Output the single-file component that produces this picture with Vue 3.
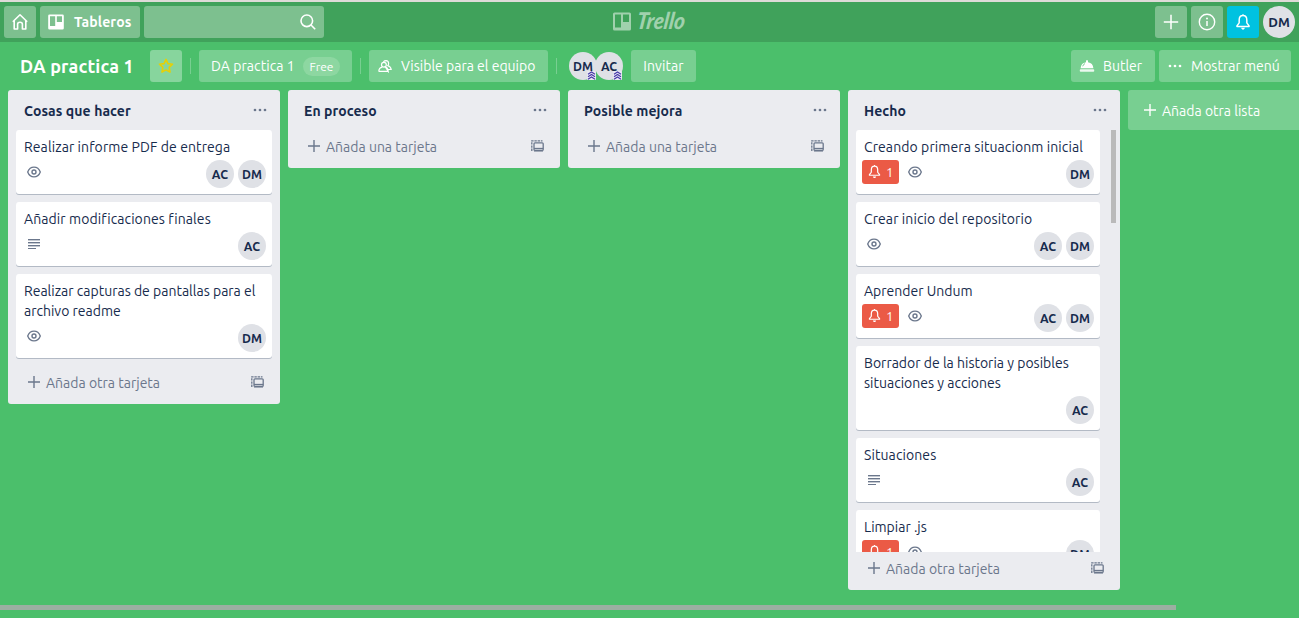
<script setup>
const lists = [
  {
    title: 'Cosas que hacer', add: 'Añada otra tarjeta',
    cards: [
      { lines: ['Realizar informe PDF de entrega'], eye: true, who: ['AC', 'DM'] },
      { lines: ['Añadir modificaciones finales'], desc: true, who: ['AC'] },
      { lines: ['Realizar capturas de pantallas para el', 'archivo readme'], eye: true, who: ['DM'], snug: true },
    ],
  },
  { title: 'En proceso', add: 'Añada una tarjeta', cards: [] },
  { title: 'Posible mejora', add: 'Añada una tarjeta', cards: [] },
  {
    title: 'Hecho', add: 'Añada otra tarjeta', scroll: true,
    cards: [
      { lines: ['Creando primera situacionm inicial'], alert: 1, eye: true, who: ['DM'] },
      { lines: ['Crear inicio del repositorio'], eye: true, who: ['AC', 'DM'] },
      { lines: ['Aprender Undum'], alert: 1, eye: true, who: ['AC', 'DM'], snug: true },
      { lines: ['Borrador de la historia y posibles', 'situaciones y acciones'], who: ['AC'], snug: true },
      { lines: ['Situaciones'], desc: true, who: ['AC'] },
      { lines: ['Limpiar .js'], alert: 1, eye: true, who: ['DM'], snug: true },
    ],
  },
]
const boardMembers = ['DM', 'AC']
</script>

<template>
  <div class="app">
    <svg class="defs" width="0" height="0">
      <symbol id="bell" viewBox="0 0 16 16">
        <path d="M8 1V2.4M8 2.2C5.7 2.2 4.6 4 4.6 6.2V8.8L2.6 11.4V12H13.4V11.4L11.4 8.8V6.2C11.4 4 10.3 2.2 8 2.2Z" fill="none" stroke="currentColor" stroke-width="1.3" stroke-linejoin="round" />
        <path d="M6.3 13.2H9.7C9.4 14.3 8.8 14.8 8 14.8S6.6 14.3 6.3 13.2Z" fill="currentColor" />
      </symbol>
      <symbol id="dots" viewBox="0 0 14 4">
        <circle cx="2" cy="2" r="1.35" fill="currentColor" /><circle cx="7" cy="2" r="1.35" fill="currentColor" /><circle cx="12" cy="2" r="1.35" fill="currentColor" />
      </symbol>
      <symbol id="plus" viewBox="0 0 12 12">
        <path d="M6 0V12M0 6H12" fill="none" stroke="currentColor" stroke-width="1.4" />
      </symbol>
      <symbol id="board" viewBox="0 0 16 16">
        <path fill-rule="evenodd" fill="currentColor" d="M1.5 0.5H14.5Q15.8 .5 15.8 1.8V14.2Q15.8 15.5 14.5 15.5H1.5Q.2 15.5 .2 14.2V1.8Q.2 .5 1.5 .5ZM2 2.2V12H7.2V2.2ZM8.8 2.2V8H14V2.2Z" />
      </symbol>
    </svg>

    <header class="top">
      <div class="side">
        <div class="hbtn square">
          <svg width="18" height="18" viewBox="0 0 18 18" fill="none" stroke="#fff" stroke-width="1.6" stroke-linejoin="round"><path d="M1.8 8.8L9 1.8L16.2 8.8M3.2 7.6V16H6.6V11.3Q6.6 9.3 9 9.3T11.4 11.3V16H14.8V7.6" /></svg>
        </div>
        <div class="hbtn boards"><svg width="16" height="16"><use href="#board" /></svg><span>Tableros</span></div>
        <div class="hbtn search">
          <svg width="16" height="16" viewBox="0 0 16 16" fill="none" stroke="#fff" stroke-width="1.6"><circle cx="6.8" cy="6.8" r="5.8" /><path d="M11 11L15.2 15.2" /></svg>
        </div>
      </div>
      <div class="logo">
        <svg width="80" height="30" viewBox="0 0 80 30">
          <path fill-rule="evenodd" fill="currentColor" d="M2.5 5.5H17.5Q19 5.5 19 7V22Q19 23.5 17.5 23.5H2.5Q1 23.5 1 22V7Q1 5.5 2.5 5.5ZM3 7.5V20.5H9V7.5ZM11 7.5V15H17V7.5Z" />
          <text x="21" y="0" transform="translate(3 22) skewX(-8)" textLength="48" lengthAdjust="spacingAndGlyphs" fill="currentColor" class="wordmark">Trello</text>
        </svg>
      </div>
      <div class="side">
        <div class="hbtn square"><svg width="16" height="16" viewBox="0 0 16 16"><path d="M8 .8V15.2M.8 8H15.2" stroke="#fff" stroke-width="1.5" /></svg></div>
        <div class="hbtn square">
          <svg width="18" height="18" viewBox="0 0 18 18"><circle cx="9" cy="9" r="7.7" fill="none" stroke="#fff" stroke-width="1.4" /><path d="M9 8V13" stroke="#fff" stroke-width="1.5" /><circle cx="9" cy="5.6" r="1" fill="#fff" /></svg>
        </div>
        <div class="hbtn square notify"><svg width="18" height="18"><use href="#bell" /></svg></div>
        <div class="avatar large">DM</div>
      </div>
    </header>

    <nav class="bar">
      <h1>DA practica 1</h1>
      <div class="btn star">
        <svg width="16" height="16" viewBox="0 0 14 14"><path d="M7 1.2L8.7 4.9L12.7 5.4L9.8 8.2L10.5 12.3L7 10.4L3.5 12.3L4.2 8.2L1.3 5.4L5.3 4.9Z" fill="none" stroke="#e6d005" stroke-width="1.4" stroke-linejoin="round" /></svg>
      </div>
      <i class="sep"></i>
      <div class="btn team"><span>DA practica 1</span><em>Free</em></div>
      <i class="sep"></i>
      <div class="btn visible">
        <svg width="14" height="13" viewBox="0 0 14 13" fill="none" stroke="#fff" stroke-width="1.2"><circle cx="5.9" cy="4.7" r="2.4" /><path d="M.8 11.4Q.9 7.7 4.3 7.2M7.5 7.2Q10 7.7 10.2 11.4ZM.8 11.4H10.2M5.4 1.9Q6.4 .7 8 .7Q10.6 .9 10.6 3.4Q10.6 4.8 9.8 5.6Q12.8 6.6 13.2 9.5H10.4" /></svg>
        <span>Visible para el equipo</span>
      </div>
      <i class="sep"></i>
      <div class="members">
        <div v-for="m in boardMembers" :key="m" class="avatar">{{ m }}
          <svg class="admin" width="9" height="9" viewBox="0 0 9 9"><rect width="9" height="9" rx="1" fill="#e8e8f2" /><path d="M1 3.2L4.5 1L8 3.2M1 5.7L4.5 3.5L8 5.7M1 8.2L4.5 6L8 8.2" fill="none" stroke="#4638a8" stroke-width="1.1" /></svg>
        </div>
      </div>
      <div class="btn invite">Invitar</div>
      <div class="btn butler">
        <svg width="16" height="14" viewBox="0 0 16 14"><path d="M1.6 9.2Q2 3.9 7 3.2V2Q7.3 1 8 1T9 2V3.2Q14 3.9 14.4 9.2Z" fill="#fff" /><path d="M3.7 7.3Q4.3 5.2 6 4.6" fill="none" stroke="#78cf91" /><rect x=".8" y="10.3" width="14.4" height="2.5" rx=".8" fill="#fff" opacity=".85" /></svg>
        <span>Butler</span>
      </div>
      <div class="btn menu"><svg width="14" height="4"><use href="#dots" /></svg><span>Mostrar menú</span></div>
    </nav>

    <main class="canvas">
      <section v-for="l in lists" :key="l.title" class="list">
        <div class="head"><h2>{{ l.title }}</h2><svg width="14" height="4"><use href="#dots" /></svg></div>
        <div class="cards" :class="{ scroll: l.scroll }">
          <article v-for="c in l.cards" :key="c.lines[0]" class="card" :class="{ snug: c.snug }">
            <p v-for="t in c.lines" :key="t">{{ t }}</p>
            <div class="meta">
              <span v-if="c.alert" class="alert"><svg width="15" height="15"><use href="#bell" /></svg>{{ c.alert }}</span>
              <svg v-if="c.eye" class="eye" width="14" height="12" viewBox="0 0 14 12" fill="none" stroke="#6b778c"><path d="M.7 6C2 2.6 4.2 1.1 7 1.1S12 2.6 13.3 6C12 9.4 9.8 10.9 7 10.9S2 9.4 .7 6Z" stroke-width="1.35" /><circle cx="7" cy="6" r="2" stroke-width="1.4" /></svg>
              <svg v-if="c.desc" class="desc" width="12" height="10" viewBox="0 0 12 10" fill="#6b778c"><path d="M0 0H12V1H0ZM0 3H12V4H0ZM0 6H12V7H0ZM0 9H8V10H0Z" /><path d="M0 1H12V2H0ZM0 4H12V5H0ZM0 7H12V8H0Z" opacity=".4" /></svg>
              <div class="who"><div v-for="w in c.who" :key="w" class="avatar">{{ w }}</div></div>
            </div>
          </article>
          <i v-if="l.scroll" class="thumb"></i>
        </div>
        <div class="foot">
          <svg width="12" height="12"><use href="#plus" /></svg><span>{{ l.add }}</span>
          <svg class="tpl" width="13" height="12" viewBox="0 0 13 12" fill="none" stroke="#6b778c"><path d="M.8 11V.8H11.5" stroke-width="1.3" stroke-dasharray="2.4 .8" /><rect x="3" y="2.8" width="9.2" height="7.6" rx="1" stroke-width="1.3" /><path d="M3 8.5H12.2" stroke-width="1.3" /><path d="M3 11.2H12" stroke-width=".8" /></svg>
        </div>
      </section>
      <div class="newlist"><svg width="12" height="12"><use href="#plus" /></svg><span>Añada otra lista</span></div>
    </main>
    <div class="hscroll"></div>
  </div>
</template>

<style>
body { margin: 0; overflow: hidden; background: #4bbf6b; }
</style>
<style scoped>
* { box-sizing: border-box; }
.app { width: 1299px; height: 618px; overflow: hidden; display: flex; flex-direction: column; background: #4bbf6b; font: 14px/20px Ubuntu, "Noto Sans", sans-serif; color: #172b4d; }
.defs { position: absolute; }
svg { display: block; flex: none; }
h1, h2, p { margin: 0; }
.top { height: 42px; flex: none; display: flex; justify-content: space-between; padding: 4px 4px 0; background: #40a25b; border-top: 2px solid #dedbd8; position: relative; color: #fff; }
.side { display: flex; gap: 4px; height: 32px; }
.hbtn { height: 32px; border-radius: 3px; background: #7dc08f; display: flex; align-items: center; }
.square { width: 32px; justify-content: center; }
.boards { width: 100px; padding-left: 8px; gap: 10px; font-weight: 700; letter-spacing: .12px; }
.search { width: 180px; justify-content: flex-end; padding-right: 8px; }
.notify { background: #00c2e0; }
.logo { position: absolute; left: 612px; top: 5px; color: #a0d1ad; }
.logo svg { overflow: visible; }
.wordmark { font: italic 900 23px/1 "Lato", sans-serif; }
.avatar { width: 28px; height: 28px; border-radius: 50%; background: #dfe1e6; color: #172b4d; font-size: 12.3px; line-height: 29px; font-weight: 700; text-align: center; flex: none; }
.avatar.large { width: 32px; height: 32px; line-height: 33px; font-size: 13.3px; }
.bar { height: 48px; flex: none; display: flex; align-items: center; padding: 0 8px; color: #fff; white-space: nowrap; }
h1 { width: 130px; margin-left: 12px; font-size: 18px; line-height: 32px; font-weight: 700; letter-spacing: .16px; }
.btn { height: 32px; border-radius: 3px; background: #78cf91; display: flex; align-items: center; line-height: 33px; flex: none; }
.star { width: 32px; justify-content: center; background: #87d59d; }
.sep { width: 1px; height: 16px; margin: 0 8px; background: #78cf91; flex: none; }
.team { width: 153px; padding-left: 12px; }
.team span { width: 92px; letter-spacing: .06px; }
em { font-style: normal; font-size: 12px; line-height: 19px; height: 19px; border-radius: 10px; background: #8dd7a1; width: 37px; text-align: center; }
.visible { width: 179px; padding-left: 9px; gap: 9px; }
.members { display: flex; margin-left: 4px; }
.members .avatar { position: relative; margin-right: -2px; }
.admin { position: absolute; right: 1px; bottom: 0; }
.invite { width: 65px; justify-content: center; margin-left: 10px; letter-spacing: .1px; }
.butler { width: 84px; margin-left: auto; padding-left: 8px; gap: 8px; }
.menu { width: 132px; margin-left: 4px; padding-left: 9px; gap: 9px; }
.canvas { display: flex; align-items: flex-start; gap: 8px; padding-left: 8px; height: 515px; flex: none; }
.list { width: 272px; flex: none; background: #ebecf0; border-radius: 3px; }
.head { height: 40px; padding: 11px 13px 9px 16px; display: flex; justify-content: space-between; }
.head svg { margin-top: 7px; color: #6b778c; }
h2 { font-size: 14px; line-height: 20px; font-weight: 700; letter-spacing: .08px; }
.cards { padding: 0 8px; }
.scroll { height: 422px; overflow: hidden; padding-right: 20px; position: relative; }
.thumb { position: absolute; right: 4px; top: 0; width: 5px; height: 93px; background: #bababa; }
.card { background: #fff; border-radius: 3px; box-shadow: 0 1px 0 #b3bac5; padding: 7px 6px 6px 8px; margin-bottom: 8px; white-space: nowrap; letter-spacing: .09px; }
.card.snug { letter-spacing: 0; }
.meta { display: flex; height: 28px; margin-top: 3px; }
.alert { width: 37px; height: 24px; margin-left: -2px; margin-right: 6px; border-radius: 3px; background: #eb5a46; color: #fff; font-size: 13px; line-height: 25px; display: flex; align-items: center; padding-left: 5px; gap: 4px; }
.alert svg { margin-top: -1px; }
.eye { margin: 6px 0 0 3px; }
.desc { margin: 7px 0 0 4px; }
.who { margin-left: auto; display: flex; gap: 4px; }
.foot { height: 38px; padding: 1px 16px 5px 20px; display: flex; align-items: center; gap: 6px; color: #6b778c; }
.foot svg { margin-top: -2px; }
.foot .tpl { margin-left: auto; margin-top: -2px; }
.newlist { width: 272px; height: 40px; flex: none; border-radius: 3px; background: #78cf91; color: #fff; display: flex; align-items: center; padding: 1px 0 0 16px; gap: 6px; }
.newlist svg { margin-top: -1px; }
.hscroll { width: 1176px; height: 5px; background: #9bafa1; flex: none; }
</style>
